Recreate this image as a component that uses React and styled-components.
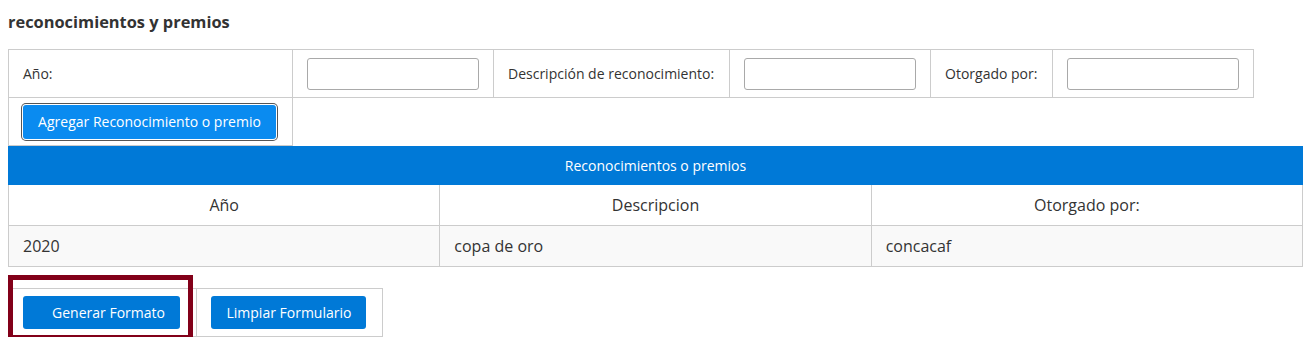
import React from "react";
import styled, { createGlobalStyle } from "styled-components";

const Global = createGlobalStyle`
  body {
    margin: 8px;
    background: #fff;
    font-family: "Open Sans", "Liberation Sans", sans-serif;
    color: #333;
  }
  * { box-sizing: border-box; }
`;

const Title = styled.h4`
  margin: 0;
  height: 41px;
  padding-top: 2px;
  font-size: 16.4px;
  font-weight: 700;
  color: #333;
`;

const FormTable = styled.table`
  border-collapse: collapse;
  table-layout: fixed;
  font-size: 14px;
`;

const Cell = styled.td`
  border: 1px solid #ccc;
  padding: 0 14px;
  height: 48px;
  width: ${(p) => p.w}px;
  vertical-align: middle;
  white-space: nowrap;
`;

const Input = styled.input`
  display: block;
  width: 172px;
  height: 32px;
  border: 1px solid #a9a9a9;
  border-radius: 3px;
  background: #fff;
`;

const Button = styled.button`
  font-family: "Open Sans", "Liberation Sans", sans-serif;
  font-size: 14px;
  color: #fff;
  background: ${(p) => (p.focused ? "#0a8bf0" : "#0079d7")};
  border: none;
  border-radius: 3px;
  height: ${(p) => p.h || 33}px;
  width: ${(p) => p.w}px;
  padding: 0 0 0 ${(p) => p.indent || 0}px;
  white-space: nowrap;
  box-shadow: ${(p) => (p.focused ? "0 0 0 1px #fff, 0 0 0 2px #555" : "none")};
  cursor: pointer;
`;

const AddCell = styled.td`
  border: 1px solid #ccc;
  height: 48px;
  padding: 0 0 0 14px;
  vertical-align: middle;
`;

const ListTable = styled.table`
  border-collapse: collapse;
  table-layout: fixed;
  width: 1295px;
  font-size: 16px;
`;

const Banner = styled.th`
  background: #0079d7;
  color: #fff;
  font-weight: 400;
  font-size: 14px;
  height: 38px;
  border: 1px solid #0079d7;
`;

const HeadCell = styled.th`
  border: 1px solid #ccc;
  font-weight: 400;
  height: 41px;
  background: #fff;
`;

const DataCell = styled.td`
  border: 1px solid #ccc;
  height: 41px;
  padding: 0 14px;
  background: #f9f9f9;
`;

const ActionsWrap = styled.div`
  position: relative;
  margin-top: 21px;
  width: 375px;
`;

const ActionsTable = styled.table`
  border-collapse: collapse;
`;

const ActionCell = styled.td`
  border: 1px solid #ccc;
  height: 48px;
  width: ${(p) => p.w}px;
  padding: 0 0 0 14px;
  vertical-align: middle;
`;

const Highlight = styled.div`
  position: absolute;
  left: 0;
  top: -13px;
  width: 185px;
  height: 65px;
  border: 5px solid #820019;
  pointer-events: none;
`;

export default function App() {
  return (
    <>
      <Global />
      <Title>reconocimientos y premios</Title>
      <FormTable>
        <tbody>
          <tr>
            <Cell w={284}>Año:</Cell>
            <Cell w={201}><Input /></Cell>
            <Cell w={236}>Descripción de reconocimiento:</Cell>
            <Cell w={201}><Input /></Cell>
            <Cell w={122}>Otorgado por:</Cell>
            <Cell w={201}><Input /></Cell>
          </tr>
          <tr>
            <AddCell>
              <Button focused w={253} h={34}>Agregar Reconocimiento o premio</Button>
            </AddCell>
          </tr>
        </tbody>
      </FormTable>
      <ListTable>
        <thead>
          <tr>
            <Banner colSpan={3}>Reconocimientos o premios</Banner>
          </tr>
          <tr>
            <HeadCell>Año</HeadCell>
            <HeadCell>Descripcion</HeadCell>
            <HeadCell>Otorgado por:</HeadCell>
          </tr>
        </thead>
        <tbody>
          <tr>
            <DataCell>2020</DataCell>
            <DataCell>copa de oro</DataCell>
            <DataCell>concacaf</DataCell>
          </tr>
        </tbody>
      </ListTable>
      <ActionsWrap>
        <ActionsTable>
          <tbody>
            <tr>
              <ActionCell w={189}>
                <Button w={157} indent={14}>Generar Formato</Button>
              </ActionCell>
              <ActionCell w={186}>
                <Button w={155}>Limpiar Formulario</Button>
              </ActionCell>
            </tr>
          </tbody>
        </ActionsTable>
        <Highlight />
      </ActionsWrap>
    </>
  );
}
